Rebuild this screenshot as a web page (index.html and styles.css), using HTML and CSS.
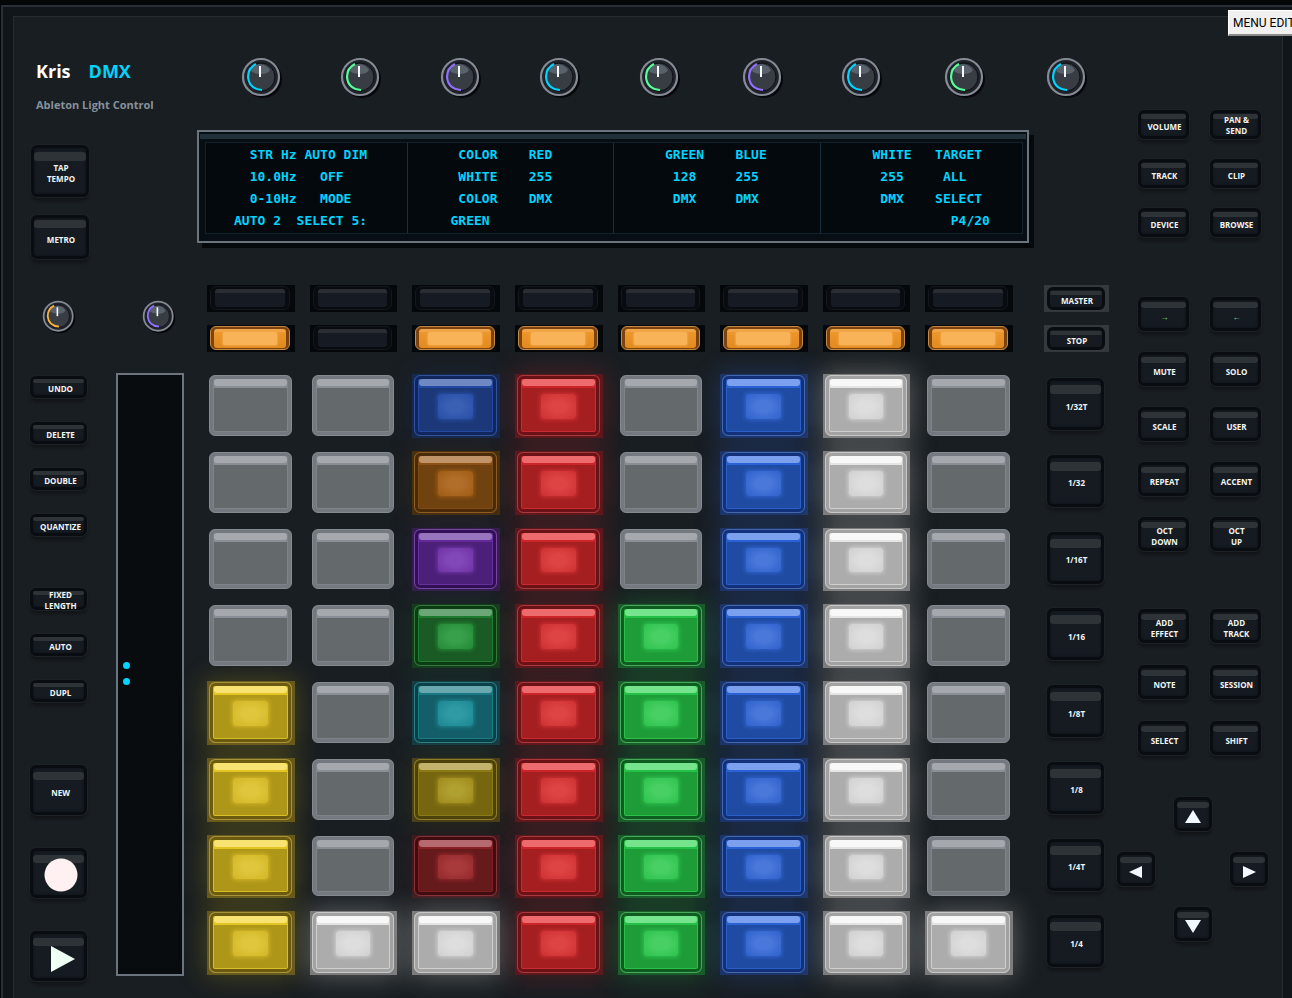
FILE: index.html
```
<!DOCTYPE html>
<html lang="en">
<head>
<meta charset="utf-8">
<title>Kris DMX</title>
<link rel="stylesheet" href="styles.css">
</head>
<body>
<svg class="defs" aria-hidden="true">
  <symbol id="knob" viewBox="0 0 42 42">
    <circle cx="22" cy="22" r="19" fill="#05070a"/>
    <circle cx="20" cy="20" r="18" fill="#1f2329" stroke="#858a94" stroke-width="2.200"/>
    <circle cx="20" cy="20" r="14" fill="#383c43" stroke="#0c0f13"/>
    <path d="M10 14 Q12 8 19 7 Q26 8 29 13 Q27 17 20 17 Q13 17 10 14Z" fill="#59616b"/>
    <path d="M15 7 Q7 11 7 20 Q8 32 21 33" fill="none" stroke="currentColor" stroke-width="2.200"/>
    <path d="M19 9V20" stroke="#f4f8fa" stroke-width="2"/>
  </symbol>
</svg>
<button class="menu-edit" type="button">MENU EDIT</button>
<div class="frame">
<main class="panel">

  <section class="left">
    <header class="brand">
      <h1>Kris <span>DMX</span></h1>
      <p>Ableton Light Control</p>
    </header>
    <div class="tempo">
      <button class="key h52">TAP<br>TEMPO</button>
      <button class="key h44">METRO</button>
    </div>
    <div class="small-knobs">
      <svg class="knob small amber"><use href="#knob"/></svg>
      <svg class="knob small violet"><use href="#knob"/></svg>
    </div>
    <div class="left-body">
      <div class="left-keys">
        <div class="stack">
          <button class="key h22">UNDO</button>
          <button class="key h22">DELETE</button>
          <button class="key h22">DOUBLE</button>
          <button class="key h22">QUANTIZE</button>
        </div>
        <div class="stack second">
          <button class="key h22 tight">FIXED<br>LENGTH</button>
          <button class="key h22">AUTO</button>
          <button class="key h22">DUPL</button>
        </div>
        <div class="stack transport">
          <button class="key h50">NEW</button>
          <button class="key h50" aria-label="Record"><svg class="rec" viewBox="0 0 34 34"><circle cx="17" cy="17" r="16.500" fill="#fff0f2"/></svg></button>
          <button class="key h50" aria-label="Play"><svg class="play" viewBox="0 0 24 26"><path d="M0 0L24 13L0 26Z" fill="#effff4"/></svg></button>
        </div>
      </div>
      <div class="strip"><i></i><i></i></div>
    </div>
  </section>

  <section class="center">
    <div class="knobs">
      <svg class="knob cyan"><use href="#knob"/></svg>
      <svg class="knob green"><use href="#knob"/></svg>
      <svg class="knob violet"><use href="#knob"/></svg>
      <svg class="knob cyan"><use href="#knob"/></svg>
      <svg class="knob green"><use href="#knob"/></svg>
      <svg class="knob violet"><use href="#knob"/></svg>
      <svg class="knob cyan"><use href="#knob"/></svg>
      <svg class="knob green"><use href="#knob"/></svg>
      <svg class="knob cyan"><use href="#knob"/></svg>
    </div>

    <div class="screen">
      <div class="lcd">
<pre class="s1">  STR Hz AUTO DIM
  10.0Hz   OFF
  0-10Hz   MODE
AUTO 2  SELECT 5:</pre>
<pre class="s2"> COLOR    RED
 WHITE    255
 COLOR    DMX
GREEN</pre>
<pre class="s3">GREEN    BLUE
 128     255
 DMX     DMX</pre>
<pre class="s4">WHITE   TARGET
 255     ALL
 DMX    SELECT
          P4/20</pre>
      </div>
    </div>

    <div class="deck tracks-deck">
      <div class="tracks">
        <button class="track" aria-label="Track 1"><span></span></button>
        <button class="track" aria-label="Track 2"><span></span></button>
        <button class="track" aria-label="Track 3"><span></span></button>
        <button class="track" aria-label="Track 4"><span></span></button>
        <button class="track" aria-label="Track 5"><span></span></button>
        <button class="track" aria-label="Track 6"><span></span></button>
        <button class="track" aria-label="Track 7"><span></span></button>
        <button class="track" aria-label="Track 8"><span></span></button>
        <button class="track lit" aria-label="State 1"><span></span></button>
        <button class="track" aria-label="State 2"><span></span></button>
        <button class="track lit" aria-label="State 3"><span></span></button>
        <button class="track lit" aria-label="State 4"><span></span></button>
        <button class="track lit" aria-label="State 5"><span></span></button>
        <button class="track lit" aria-label="State 6"><span></span></button>
        <button class="track lit" aria-label="State 7"><span></span></button>
        <button class="track lit" aria-label="State 8"><span></span></button>
      </div>
      <div class="side">
        <div class="bezel"><button class="key">MASTER</button></div>
        <div class="bezel"><button class="key">STOP</button></div>
      </div>
    </div>

    <div class="deck pads-deck">
      <div class="pads">
        <button class="pad" aria-label="Pad 1-1"><span></span></button>
        <button class="pad" aria-label="Pad 1-2"><span></span></button>
        <button class="pad on navy" aria-label="Pad 1-3"><span></span></button>
        <button class="pad on red" aria-label="Pad 1-4"><span></span></button>
        <button class="pad" aria-label="Pad 1-5"><span></span></button>
        <button class="pad on blue" aria-label="Pad 1-6"><span></span></button>
        <button class="pad on white" aria-label="Pad 1-7"><span></span></button>
        <button class="pad" aria-label="Pad 1-8"><span></span></button>

        <button class="pad" aria-label="Pad 2-1"><span></span></button>
        <button class="pad" aria-label="Pad 2-2"><span></span></button>
        <button class="pad on brown" aria-label="Pad 2-3"><span></span></button>
        <button class="pad on red" aria-label="Pad 2-4"><span></span></button>
        <button class="pad" aria-label="Pad 2-5"><span></span></button>
        <button class="pad on blue" aria-label="Pad 2-6"><span></span></button>
        <button class="pad on white" aria-label="Pad 2-7"><span></span></button>
        <button class="pad" aria-label="Pad 2-8"><span></span></button>

        <button class="pad" aria-label="Pad 3-1"><span></span></button>
        <button class="pad" aria-label="Pad 3-2"><span></span></button>
        <button class="pad on purple" aria-label="Pad 3-3"><span></span></button>
        <button class="pad on red" aria-label="Pad 3-4"><span></span></button>
        <button class="pad" aria-label="Pad 3-5"><span></span></button>
        <button class="pad on blue" aria-label="Pad 3-6"><span></span></button>
        <button class="pad on white" aria-label="Pad 3-7"><span></span></button>
        <button class="pad" aria-label="Pad 3-8"><span></span></button>

        <button class="pad" aria-label="Pad 4-1"><span></span></button>
        <button class="pad" aria-label="Pad 4-2"><span></span></button>
        <button class="pad on forest" aria-label="Pad 4-3"><span></span></button>
        <button class="pad on red" aria-label="Pad 4-4"><span></span></button>
        <button class="pad on lime" aria-label="Pad 4-5"><span></span></button>
        <button class="pad on blue" aria-label="Pad 4-6"><span></span></button>
        <button class="pad on white" aria-label="Pad 4-7"><span></span></button>
        <button class="pad" aria-label="Pad 4-8"><span></span></button>

        <button class="pad on yellow" aria-label="Pad 5-1"><span></span></button>
        <button class="pad" aria-label="Pad 5-2"><span></span></button>
        <button class="pad on teal" aria-label="Pad 5-3"><span></span></button>
        <button class="pad on red" aria-label="Pad 5-4"><span></span></button>
        <button class="pad on lime" aria-label="Pad 5-5"><span></span></button>
        <button class="pad on blue" aria-label="Pad 5-6"><span></span></button>
        <button class="pad on white" aria-label="Pad 5-7"><span></span></button>
        <button class="pad" aria-label="Pad 5-8"><span></span></button>

        <button class="pad on yellow" aria-label="Pad 6-1"><span></span></button>
        <button class="pad" aria-label="Pad 6-2"><span></span></button>
        <button class="pad on olive" aria-label="Pad 6-3"><span></span></button>
        <button class="pad on red" aria-label="Pad 6-4"><span></span></button>
        <button class="pad on lime" aria-label="Pad 6-5"><span></span></button>
        <button class="pad on blue" aria-label="Pad 6-6"><span></span></button>
        <button class="pad on white" aria-label="Pad 6-7"><span></span></button>
        <button class="pad" aria-label="Pad 6-8"><span></span></button>

        <button class="pad on yellow" aria-label="Pad 7-1"><span></span></button>
        <button class="pad" aria-label="Pad 7-2"><span></span></button>
        <button class="pad on maroon" aria-label="Pad 7-3"><span></span></button>
        <button class="pad on red" aria-label="Pad 7-4"><span></span></button>
        <button class="pad on lime" aria-label="Pad 7-5"><span></span></button>
        <button class="pad on blue" aria-label="Pad 7-6"><span></span></button>
        <button class="pad on white" aria-label="Pad 7-7"><span></span></button>
        <button class="pad" aria-label="Pad 7-8"><span></span></button>

        <button class="pad on yellow" aria-label="Pad 8-1"><span></span></button>
        <button class="pad on white" aria-label="Pad 8-2"><span></span></button>
        <button class="pad on white" aria-label="Pad 8-3"><span></span></button>
        <button class="pad on red" aria-label="Pad 8-4"><span></span></button>
        <button class="pad on lime" aria-label="Pad 8-5"><span></span></button>
        <button class="pad on blue" aria-label="Pad 8-6"><span></span></button>
        <button class="pad on white" aria-label="Pad 8-7"><span></span></button>
        <button class="pad on white" aria-label="Pad 8-8"><span></span></button>
      </div>
      <div class="scenes">
        <button class="key h52">1/32T</button>
        <button class="key h52">1/32</button>
        <button class="key h52">1/16T</button>
        <button class="key h52">1/16</button>
        <button class="key h52">1/8T</button>
        <button class="key h52">1/8</button>
        <button class="key h52">1/4T</button>
        <button class="key h52">1/4</button>
      </div>
    </div>
  </section>

  <section class="right">
    <div class="pairs short">
      <button class="key h29">VOLUME</button>
      <button class="key h29 tight">PAN &amp;<br>SEND</button>
      <button class="key h29">TRACK</button>
      <button class="key h29">CLIP</button>
      <button class="key h29">DEVICE</button>
      <button class="key h29">BROWSE</button>
    </div>
    <div class="pairs middle">
      <button class="key h34 mint">→</button>
      <button class="key h34 mint">←</button>
      <button class="key h34">MUTE</button>
      <button class="key h34">SOLO</button>
      <button class="key h34">SCALE</button>
      <button class="key h34">USER</button>
      <button class="key h34">REPEAT</button>
      <button class="key h34">ACCENT</button>
      <button class="key h34">OCT<br>DOWN</button>
      <button class="key h34">OCT<br>UP</button>
    </div>
    <div class="pairs lower">
      <button class="key h34">ADD<br>EFFECT</button>
      <button class="key h34">ADD<br>TRACK</button>
      <button class="key h34">NOTE</button>
      <button class="key h34">SESSION</button>
      <button class="key h34">SELECT</button>
      <button class="key h34">SHIFT</button>
    </div>
    <div class="arrows">
      <button class="key h34 up" aria-label="Up"><svg viewBox="0 0 16 14"><path d="M8 0L16 13H0Z"/></svg></button>
      <button class="key h34 back" aria-label="Left"><svg viewBox="0 0 16 14"><path d="M14 1V13L1 7Z"/></svg></button>
      <button class="key h34 forth" aria-label="Right"><svg viewBox="0 0 16 14"><path d="M2 1V13L15 7Z"/></svg></button>
      <button class="key h34 down" aria-label="Down"><svg viewBox="0 0 16 14"><path d="M0 0H16L8 13Z"/></svg></button>
    </div>
  </section>

</main>
</div>
</body>
</html>
```

FILE: styles.css
```
* { box-sizing: border-box; }

body {
  margin: 0;
  padding: 5px 0 0 1px;
  position: relative;
  min-height: 100vh;
  overflow: hidden;
  background: #040608;
  font-family: "Open Sans", "Noto Sans", sans-serif;
  color: #f2f5f2;
}

button { font: inherit; color: inherit; border: 0; padding: 0; }
.defs { position: absolute; width: 0; height: 0; }

.frame {
  min-height: calc(100vh - 5px);
  padding: 9px 9px 0 10px;
  border: solid #2a3037;
  border-width: 2px 0 0 2px;
  background: #11161a;
}

.panel {
  display: grid;
  grid-template-columns: 154px 1fr 151px;
  min-height: calc(100vh - 16px);
  padding: 0 14px 22px 16px;
  border: 1px solid #262c31;
  border-bottom: 0;
  background: #191e22;
}

.menu-edit {
  position: absolute;
  z-index: 2;
  top: 10px;
  right: 0;
  width: 64px;
  height: 26px;
  padding-left: 4px;
  border: solid #fff;
  border-width: 1px 0 0 1px;
  border-bottom: 2px solid #8a8a8a;
  background: #f0f0f0;
  color: #000;
  font-family: Roboto, sans-serif;
  font-size: 12px;
  text-align: left;
  white-space: nowrap;
}

/* Keys */
.key {
  --shine-top: 1px;
  --shine-height: 4px;
  position: relative;
  isolation: isolate;
  display: flex;
  align-items: center;
  justify-content: center;
  width: 100%;
  padding: 4px 0 0 2px;
  border: 3px solid #090d12;
  border-radius: 6px;
  background: #161b22;
  box-shadow: 0 0 0 1px #1d2227, 0 4px 3px rgba(0, 0, 0, .3), inset 0 0 2px 1px #12161b;
  font-size: 8px;
  font-weight: 700;
  line-height: 11px;
  text-align: center;
}
.key::before {
  content: "";
  position: absolute;
  z-index: -1;
  top: var(--shine-top);
  left: 0;
  right: 0;
  height: var(--shine-height);
  border-radius: 3px;
  background: #2e3337;
}
.h22 { height: 22px; --shine-top: 0px; padding-top: 2px; }
.h29 { height: 29px; --shine-height: 5px; padding-top: 3px; }
.h34 { height: 34px; --shine-top: 2px; --shine-height: 6px; }
.h44 { height: 44px; --shine-top: 2px; --shine-height: 8px; }
.h50 { height: 50px; --shine-top: 4px; --shine-height: 8px; }
.h52 { height: 52px; --shine-top: 4px; --shine-height: 9px; }
.key.tight { padding-top: 1px; }
.mint { color: #8ff0a0; }

/* Knobs */
.knob { display: block; width: 42px; height: 42px; }
.knob.small { width: 34px; height: 34px; }
.cyan { color: #00d4ff; }
.green { color: #55ff9a; }
.violet { color: #8f70ff; }
.amber { color: #ffb13b; }

/* Left column */
.brand { padding: 42px 0 0 6px; }
.brand h1 {
  display: flex;
  gap: 18px;
  margin: 0 0 14px;
  font-size: 18px;
  line-height: 24px;
  color: #fff;
}
.brand h1 span { color: #00d4ff; }
.brand p {
  margin: 0;
  font-size: 11px;
  font-weight: 700;
  line-height: 16px;
  color: #87919b;
  white-space: nowrap;
}
.tempo { display: grid; gap: 18px; width: 58px; margin: 32px 0 0 1px; }
.small-knobs { display: flex; gap: 66px; padding: 41px 0 0 12px; }
.left-body { display: flex; justify-content: space-between; align-items: flex-start; margin-top: 39px; }
.left-keys { width: 57px; padding-top: 3px; }
.left-keys .key { padding-left: 4px; }
.stack { display: grid; gap: 24px; }
.stack.second { margin-top: 52px; }
.stack.transport { margin-top: 63px; gap: 33px; }
.rec { width: 34px; height: 34px; }
.play { width: 24px; height: 26px; margin: 2px 0 0 4px; }
.strip {
  display: flex;
  flex-direction: column;
  gap: 9px;
  width: 68px;
  min-height: 603px;
  padding: 287px 0 0 5px;
  border: 2px solid #6c757e;
  background: #080c0f;
}
.strip i { width: 7px; height: 7px; border-radius: 50%; background: #00d4ff; }

/* Centre */
.center { padding-top: 40px; margin: 0 7px 0 13px; }
.knobs {
  display: grid;
  grid-template-columns: 99fr 100fr 99fr 100fr 103fr 99fr 103fr 102fr 42px;
  margin: 0 22px 0 44px;
}
.screen {
  margin: 31px 81px 0 0;
  padding: 2px 1px 7px;
  border: 2px solid #6c757e;
  background: #070e14;
  box-shadow: 5px 5px 0 #06090b;
}
.screen::before { content: ""; display: block; height: 5px; background: #22303a; }
.lcd {
  display: grid;
  grid-template-columns: 201fr 207fr 208fr 202fr;
  margin: 3px 3px 0 5px;
  border: 1px solid #12212a;
  background: #04090d;
  color: #00d4ff;
}
.lcd pre {
  margin: 0;
  padding-top: 1px;
  min-height: 90px;
  font: 700 13px/22px "DejaVu Sans Mono", monospace;
}
.lcd pre + pre { border-left: 1px solid #18303a; }
.lcd .s1 { padding-left: 28px; }
.lcd .s2 { padding-left: 43px; }
.lcd .s3, .lcd .s4 { padding-left: 51px; }

.deck { display: flex; gap: 31px; margin: 0 1px 0 10px; }
.tracks-deck { margin-top: 42px; }
.pads-deck { margin-top: 22px; }
.tracks, .pads { display: grid; flex: 1; grid-template-columns: repeat(8, 1fr); gap: 13px 15px; }
.side { display: grid; gap: 13px; width: 65px; }
.bezel { height: 27px; padding: 2px 4px 2px 3px; background: #34393d; }
.bezel .key { height: 23px; padding-top: 3px; box-shadow: none; }

.track { height: 27px; padding: 1px 5px 2px 3px; background: #05080b; }
.track span {
  position: relative;
  display: block;
  height: 24px;
  border: 1px solid #14181c;
  border-radius: 6px;
  background: #080b0f;
}
.track span::before {
  content: "";
  position: absolute;
  inset: 2px 4px 2px 4px;
  border-top: 4px solid #2a2e32;
  border-radius: 3px;
  background: #161a23;
}
.track.lit span { border-color: #c48a45; background: #7c430e; }
.track.lit span::before {
  inset: 2px 3px 1px 3px;
  border-top: 3px solid #f0a44a;
  background: linear-gradient(#ec962b, #e08a20);
}
.track.lit span::after {
  content: "";
  position: absolute;
  inset: 5px 12px 4px;
  border-radius: 2px;
  background: #f8b258;
  box-shadow: 0 0 2px 1px #f2a644;
}

/* Pads */
.pads { grid-auto-rows: 1fr; min-height: 601px; }
.pad {
  --edge: #858a90;
  --ring: #73797f;
  --line: #7e848a;
  --top: #898e96;
  --shine: #a5a9ad;
  --face: #64696c;
  padding: 1px 3px 2px 2px;
  background: transparent;
}
.pad span {
  position: relative;
  display: block;
  height: 100%;
  border: 1px solid var(--edge);
  border-radius: 6px;
  background: linear-gradient(var(--top) 12px, var(--face) 12px);
  box-shadow: inset 0 0 0 3px var(--ring), inset 0 0 0 4px var(--line);
}
.pad span::before {
  content: "";
  position: absolute;
  top: 3px;
  left: 4px;
  right: 4px;
  height: 7px;
  border-radius: 3px;
  background: var(--shine);
}
.pad.on { background: var(--halo); box-shadow: 0 0 26px 2px var(--aura); }
.pad.on span::after {
  content: "";
  position: absolute;
  inset: 18px 23px 16px 23px;
  border-radius: 3px;
  background: radial-gradient(var(--core) 30%, var(--glow) 90%);
  box-shadow: 0 0 4px 1px var(--glow);
}
.red { --edge: #a83a3e; --ring: #6a1216; --line: #c82c30; --top: #cc2529; --shine: #ee6b6d; --face: #a51f21; --glow: #d03234; --core: #de4444; --halo: #5c181c; --aura: #b4202450; }
.blue { --edge: #4468ae; --ring: #12317a; --line: #2b5fc8; --top: #2a62d6; --shine: #7ba0ee; --face: #1f4ba2; --glow: #3264ce; --core: #4a78da; --halo: #1d3468; --aura: #2858c450; }
.navy { --edge: #31539c; --ring: #10265c; --line: #2349a0; --top: #224aa4; --shine: #7089c2; --face: #1c3878; --glow: #294fa8; --core: #3a60b4; --halo: #172950; --aura: #20408028; }
.brown { --edge: #8e5c22; --ring: #4a2a0a; --line: #7e4c14; --top: #8a5014; --shine: #c09468; --face: #704210; --glow: #a05e18; --core: #b06e2a; --halo: #45300f; --aura: #80481028; }
.purple { --edge: #74469e; --ring: #321056; --line: #6a30a0; --top: #622a98; --shine: #9874be; --face: #4c2078; --glow: #7036a8; --core: #8248b8; --halo: #351d50; --aura: #60289028; }
.forest { --edge: #34783e; --ring: #0c3c14; --line: #227c30; --top: #1e7a2e; --shine: #6ca676; --face: #1a5a24; --glow: #268c38; --core: #38a04a; --halo: #163c1e; --aura: #20803028; }
.lime { --edge: #48a85c; --ring: #0e5c20; --line: #2ac04a; --top: #24c048; --shine: #76e48c; --face: #1e9c38; --glow: #30c450; --core: #48d064; --halo: #1a5c2a; --aura: #20b04050; }
.teal { --edge: #2e7c84; --ring: #0a4048; --line: #1c7c86; --top: #187884; --shine: #68a8ae; --face: #135e68; --glow: #1e8894; --core: #309aa4; --halo: #143e44; --aura: #18808028; }
.yellow { --edge: #a8923a; --ring: #6c5a10; --line: #d8be28; --top: #e2c422; --shine: #f8e272; --face: #ae9618; --glow: #d4b828; --core: #dfc63c; --halo: #66591c; --aura: #b0981450; }
.olive { --edge: #8e7e2c; --ring: #4e420c; --line: #8c7a18; --top: #8c7a14; --shine: #c2b46c; --face: #766610; --glow: #a08c1e; --core: #b0a030; --halo: #4a4218; --aura: #80701028; }
.maroon { --edge: #843438; --ring: #400c10; --line: #7c2024; --top: #882024; --shine: #b46a6e; --face: #661a1c; --glow: #962a2c; --core: #a83a3c; --halo: #401a1e; --aura: #80202428; }
.white { --edge: #c8c8c8; --ring: #a2a2a2; --line: #cfcfcf; --top: #e4e4e4; --shine: #f8f8f8; --face: #acacac; --glow: #d2d2d2; --core: #dedede; --halo: #7c7c7c; --aura: #c8c8c85c; }

.scenes {
  display: grid;
  grid-auto-rows: 1fr;
  gap: 13px;
  width: 65px;
  margin: 4px 0 -4px;
  padding: 0 5px 0 3px;
}

/* Right column */
.right { padding-top: 93px; }
.pairs {
  display: grid;
  grid-template-columns: 51px 51px;
  gap: 21px;
  justify-content: end;
  padding-right: 7px;
}
.pairs.short { row-gap: 20px; }
.pairs.middle { margin-top: 60px; }
.pairs.lower { margin-top: 58px; row-gap: 22px; }
.arrows {
  display: grid;
  grid-template-columns: repeat(3, 38px);
  grid-template-areas: ". up ." "back . forth" ". down .";
  row-gap: 21px;
  justify-content: space-between;
  margin-top: 42px;
}
.arrows .key { padding: 5px 0 0; }
.arrows svg { width: 16px; height: 14px; fill: #f2f8ff; }
.up { grid-area: up; }
.back { grid-area: back; }
.forth { grid-area: forth; }
.down { grid-area: down; }
```
